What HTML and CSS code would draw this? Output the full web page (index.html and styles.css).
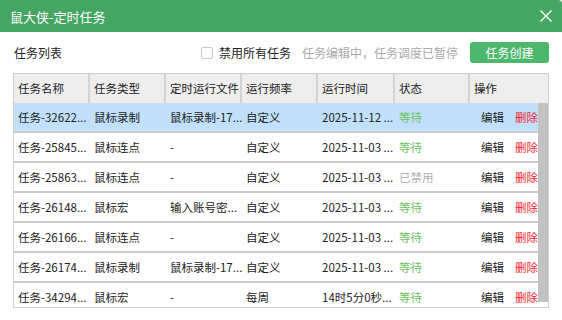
FILE: index.html
```html
<!DOCTYPE html>
<html lang="zh-CN">
<head>
    <meta charset="UTF-8">
    <title>鼠大侠-定时任务</title>
    <link rel="stylesheet" href="styles.css">
</head>
<body>

<div class="window">
    <div class="titlebar">
        <span class="title">鼠大侠-定时任务</span>
        <span class="close">
            <svg width="12" height="12" viewBox="0 0 12 12"><path d="M0.5 0.5 L11.5 11.5 M11.5 0.5 L0.5 11.5" stroke="#fff" stroke-width="1.4" fill="none"/></svg>
        </span>
    </div>

    <div class="toolbar">
        <span class="toolbar-label">任务列表</span>
        <label class="disable-all"><span class="checkbox"></span>禁用所有任务</label>
        <span class="hint">任务编辑中，任务调度已暂停</span>
        <button class="create">任务创建</button>
    </div>

    <div class="grid">
        <div class="grid-head">
            <div class="cell">任务名称</div>
            <div class="cell">任务类型</div>
            <div class="cell">定时运行文件</div>
            <div class="cell">运行频率</div>
            <div class="cell">运行时间</div>
            <div class="cell">状态</div>
            <div class="cell">操作</div>
        </div>
        <div class="grid-body">
            <div class="rows">
                <div class="row selected">
                    <div class="cell">任务-32622...</div>
                    <div class="cell">鼠标录制</div>
                    <div class="cell">鼠标录制-17...</div>
                    <div class="cell">自定义</div>
                    <div class="cell">2025-11-12 ...</div>
                    <div class="cell status-wait">等待</div>
                    <div class="cell ops"><span>编辑</span><span class="delete">删除</span></div>
                </div>
                <div class="row">
                    <div class="cell">任务-25845...</div>
                    <div class="cell">鼠标连点</div>
                    <div class="cell">-</div>
                    <div class="cell">自定义</div>
                    <div class="cell">2025-11-03 ...</div>
                    <div class="cell status-wait">等待</div>
                    <div class="cell ops"><span>编辑</span><span class="delete">删除</span></div>
                </div>
                <div class="row">
                    <div class="cell">任务-25863...</div>
                    <div class="cell">鼠标连点</div>
                    <div class="cell">-</div>
                    <div class="cell">自定义</div>
                    <div class="cell">2025-11-03 ...</div>
                    <div class="cell status-off">已禁用</div>
                    <div class="cell ops"><span>编辑</span><span class="delete">删除</span></div>
                </div>
                <div class="row">
                    <div class="cell">任务-26148...</div>
                    <div class="cell">鼠标宏</div>
                    <div class="cell">输入账号密...</div>
                    <div class="cell">自定义</div>
                    <div class="cell">2025-11-03 ...</div>
                    <div class="cell status-wait">等待</div>
                    <div class="cell ops"><span>编辑</span><span class="delete">删除</span></div>
                </div>
                <div class="row">
                    <div class="cell">任务-26166...</div>
                    <div class="cell">鼠标连点</div>
                    <div class="cell">-</div>
                    <div class="cell">自定义</div>
                    <div class="cell">2025-11-03 ...</div>
                    <div class="cell status-wait">等待</div>
                    <div class="cell ops"><span>编辑</span><span class="delete">删除</span></div>
                </div>
                <div class="row">
                    <div class="cell">任务-26174...</div>
                    <div class="cell">鼠标录制</div>
                    <div class="cell">鼠标录制-17...</div>
                    <div class="cell">自定义</div>
                    <div class="cell">2025-11-03 ...</div>
                    <div class="cell status-wait">等待</div>
                    <div class="cell ops"><span>编辑</span><span class="delete">删除</span></div>
                </div>
                <div class="row">
                    <div class="cell">任务-34294...</div>
                    <div class="cell">鼠标宏</div>
                    <div class="cell">-</div>
                    <div class="cell">每周</div>
                    <div class="cell">14时5分0秒...</div>
                    <div class="cell status-wait">等待</div>
                    <div class="cell ops"><span>编辑</span><span class="delete">删除</span></div>
                </div>
            </div>
            <div class="scrollbar"><div class="thumb"></div></div>
        </div>
    </div>
</div>

</body>
</html>
```

FILE: styles.css
```css
body {
    margin: 0;
    font-family: "Noto Sans CJK SC", "Noto Sans", sans-serif;
    font-size: 12px;
    color: #222;
    background-color: #fff;
}

.window {
    width: 562px;
    height: 320px;
    overflow: hidden;
    background-color: #fff;
}

.titlebar {
    height: 32px;
    display: flex;
    align-items: center;
    justify-content: space-between;
    padding: 0 10px;
    background-color: #45a562;
    color: #fff;
    border-top-right-radius: 4px;
}

.title {
    font-size: 13px;
}

.close {
    display: flex;
}

.toolbar {
    height: 21px;
    display: flex;
    align-items: center;
    margin: 10px 13px 10px 14px;
}

.disable-all {
    margin-left: auto;
    display: flex;
    align-items: center;
    gap: 6px;
}

.checkbox {
    width: 10px;
    height: 10px;
    border: 1px solid #c8c8c8;
    border-radius: 2px;
    background-color: #fff;
}

.hint {
    margin-left: 11px;
    color: #aaa;
}

.create {
    margin-left: 12px;
    width: 79px;
    height: 21px;
    border: none;
    border-radius: 3px;
    background-color: #4db86c;
    color: #fff;
    font-family: inherit;
    font-size: 12px;
    padding: 0;
}

.grid {
    margin: 0 13px;
    font-size: 11.5px;
    border-left: 1px solid #cfcfcf;
    border-right: 1px solid #cfcfcf;
    border-bottom: 1px solid #cfcfcf;
}

.grid-head,
.row {
    display: grid;
    grid-template-columns: 76px 76px 76px 76px 77px 75px 78px;
}

.grid-head {
    border-top: 1px solid #cfcfcf;
    background-color: #eeeeee;
}

.grid-head .cell {
    height: 29px;
    line-height: 29px;
    border-right: 2px solid #d4d4d4;
}

.grid-head .cell:last-child {
    border-right: none;
}

.cell {
    padding-left: 4px;
    white-space: nowrap;
    overflow: hidden;
}

.grid-body {
    display: flex;
    height: 204px;
    overflow: hidden;
}

.rows {
    width: 524px;
    overflow: hidden;
}

.row {
    height: 28px;
    line-height: 28px;
    border-bottom: 2px solid #cccccc;
    background-color: #fff;
}

.row.selected {
    background-color: #c0e0fb;
}

.status-wait {
    color: #6cbf5c;
}

.status-off {
    color: #b0b0b0;
}

.ops {
    display: flex;
    gap: 11px;
    padding-left: 11px;
}

.delete {
    color: #f5222d;
}

.scrollbar {
    width: 10px;
    background-color: #fff;
}

.thumb {
    height: 199px;
    background-color: #c2c2c2;
}
```
